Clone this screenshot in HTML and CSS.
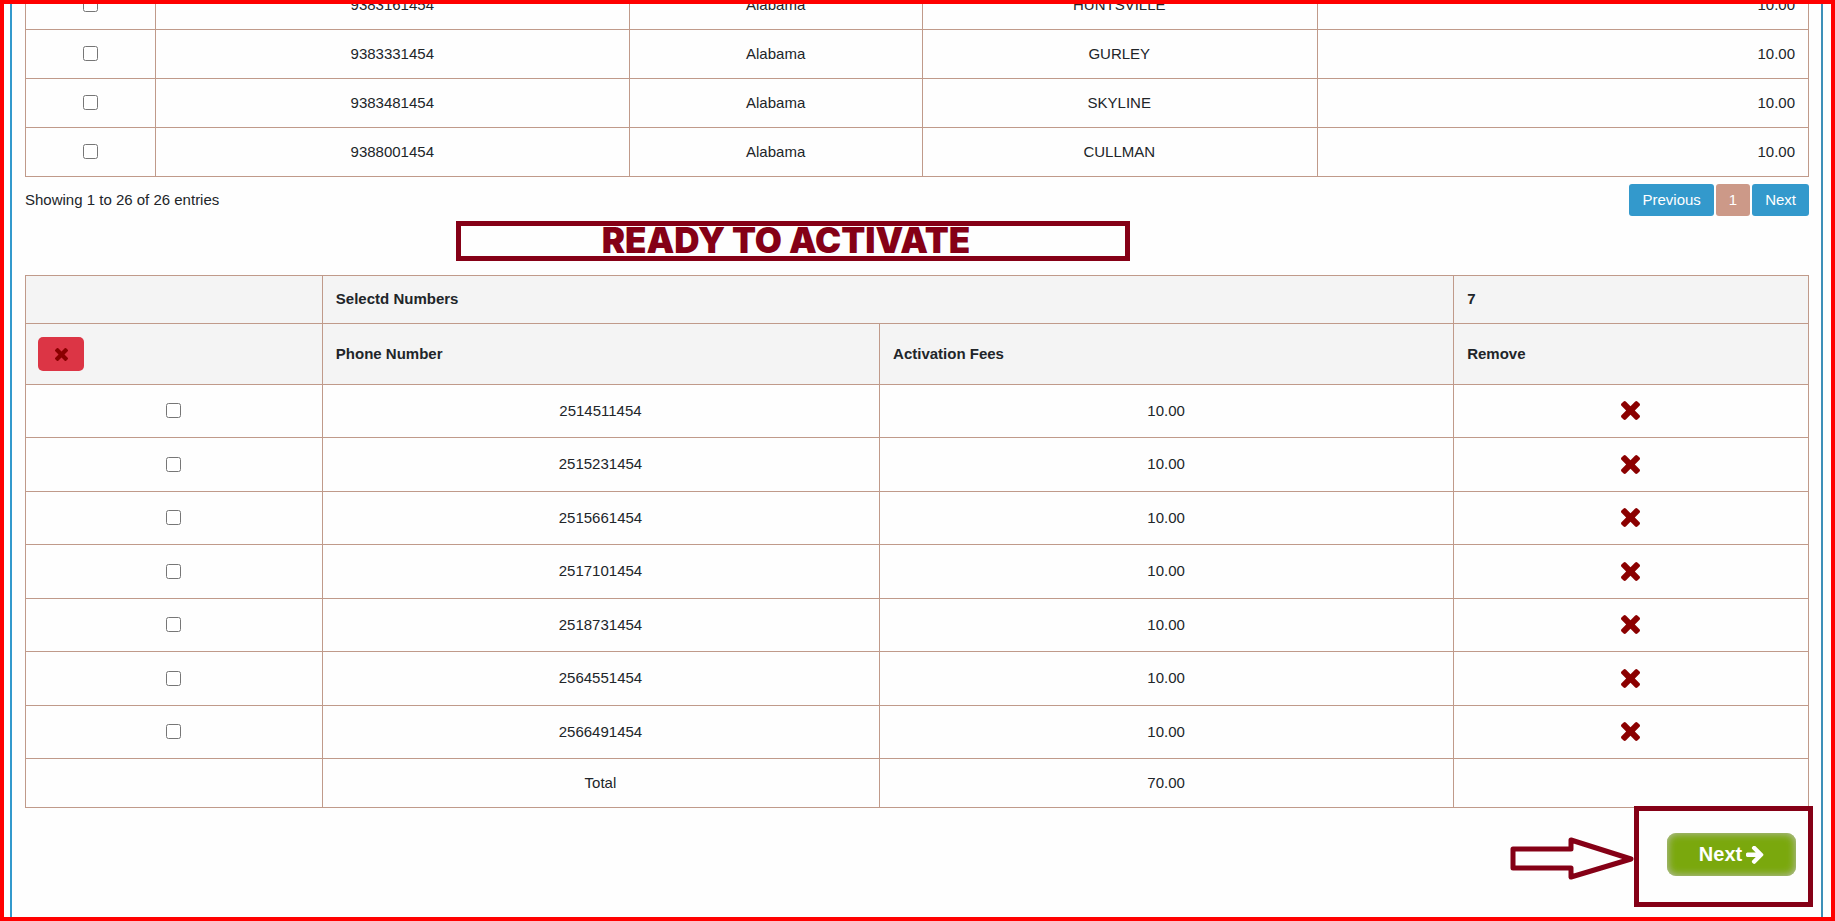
FILE: index.html
```html
<!DOCTYPE html>
<html lang="en">

<head>
  <meta charset="utf-8">
  <meta name="viewport" content="width=device-width, initial-scale=1">
  <title>Phone Numbers</title>
  <link rel="stylesheet" href="styles.css">
</head>

<body>
  <!-- shared icons -->
  <svg class="icon-defs" aria-hidden="true">
    <symbol id="icon-times" viewBox="302 366 1188 1188">
      <path d="M1490 1322q0 40-28 68l-136 136q-28 28-68 28t-68-28l-294-294-294 294q-28 28-68 28t-68-28l-136-136q-28-28-28-68t28-68l294-294-294-294q-28-28-28-68t28-68l136-136q28-28 68-28t68 28l294 294 294-294q28-28 68-28t68 28l136 136q28 28 28 68t-28 68l-294 294 294 294q28 28 28 68z"/>
    </symbol>
    <symbol id="icon-arrow" viewBox="128 219 1520 1520">
      <path d="M1600 960q0 54-37 91l-651 651q-39 37-91 37-51 0-90-37l-75-75q-38-38-38-91t38-91l293-293h-704q-52 0-84.5-37.5t-32.5-90.5v-128q0-53 32.5-90.5t84.5-37.5h704l-293-294q-38-36-38-90t38-90l75-75q38-38 90-38 53 0 91 38l651 651q37 35 37 90z"/>
    </symbol>
  </svg>

  <main class="panel">
    <table class="grid numbers">
      <colgroup>
        <col class="col-check">
        <col class="col-number">
        <col class="col-state">
        <col class="col-city">
        <col>
      </colgroup>
      <tbody>
        <tr>
          <td><input type="checkbox" aria-label="9383161454"></td>
          <td>9383161454</td>
          <td>Alabama</td>
          <td>HUNTSVILLE</td>
          <td class="amount">10.00</td>
        </tr>
        <tr>
          <td><input type="checkbox" aria-label="9383331454"></td>
          <td>9383331454</td>
          <td>Alabama</td>
          <td>GURLEY</td>
          <td class="amount">10.00</td>
        </tr>
        <tr>
          <td><input type="checkbox" aria-label="9383481454"></td>
          <td>9383481454</td>
          <td>Alabama</td>
          <td>SKYLINE</td>
          <td class="amount">10.00</td>
        </tr>
        <tr>
          <td><input type="checkbox" aria-label="9388001454"></td>
          <td>9388001454</td>
          <td>Alabama</td>
          <td>CULLMAN</td>
          <td class="amount">10.00</td>
        </tr>
      </tbody>
    </table>

    <div class="table-footer">
      <div class="info">Showing 1 to 26 of 26 entries</div>
      <nav class="pagination">
        <a href="#">Previous</a>
        <a href="#" class="current">1</a>
        <a href="#">Next</a>
      </nav>
    </div>

    <h2 class="banner">READY TO ACTIVATE</h2>

    <table class="grid selected">
      <colgroup>
        <col class="col-pick">
        <col class="col-phone">
        <col class="col-fees">
        <col>
      </colgroup>
      <thead>
        <tr>
          <th></th>
          <th colspan="2">Selectd Numbers</th>
          <th>7</th>
        </tr>
        <tr class="head-tall">
          <th>
            <button type="button" class="btn-remove-all" aria-label="Remove selected">
              <svg class="icon-small"><use href="#icon-times"/></svg>
            </button>
          </th>
          <th>Phone Number</th>
          <th>Activation Fees</th>
          <th>Remove</th>
        </tr>
      </thead>
      <tbody>
        <tr>
          <td><input type="checkbox" aria-label="2514511454"></td>
          <td>2514511454</td>
          <td>10.00</td>
          <td><button type="button" class="btn-remove" aria-label="Remove"><svg class="icon"><use href="#icon-times"/></svg></button></td>
        </tr>
        <tr>
          <td><input type="checkbox" aria-label="2515231454"></td>
          <td>2515231454</td>
          <td>10.00</td>
          <td><button type="button" class="btn-remove" aria-label="Remove"><svg class="icon"><use href="#icon-times"/></svg></button></td>
        </tr>
        <tr>
          <td><input type="checkbox" aria-label="2515661454"></td>
          <td>2515661454</td>
          <td>10.00</td>
          <td><button type="button" class="btn-remove" aria-label="Remove"><svg class="icon"><use href="#icon-times"/></svg></button></td>
        </tr>
        <tr>
          <td><input type="checkbox" aria-label="2517101454"></td>
          <td>2517101454</td>
          <td>10.00</td>
          <td><button type="button" class="btn-remove" aria-label="Remove"><svg class="icon"><use href="#icon-times"/></svg></button></td>
        </tr>
        <tr>
          <td><input type="checkbox" aria-label="2518731454"></td>
          <td>2518731454</td>
          <td>10.00</td>
          <td><button type="button" class="btn-remove" aria-label="Remove"><svg class="icon"><use href="#icon-times"/></svg></button></td>
        </tr>
        <tr>
          <td><input type="checkbox" aria-label="2564551454"></td>
          <td>2564551454</td>
          <td>10.00</td>
          <td><button type="button" class="btn-remove" aria-label="Remove"><svg class="icon"><use href="#icon-times"/></svg></button></td>
        </tr>
        <tr>
          <td><input type="checkbox" aria-label="2566491454"></td>
          <td>2566491454</td>
          <td>10.00</td>
          <td><button type="button" class="btn-remove" aria-label="Remove"><svg class="icon"><use href="#icon-times"/></svg></button></td>
        </tr>
      </tbody>
      <tfoot>
        <tr>
          <td></td>
          <td>Total</td>
          <td>70.00</td>
          <td></td>
        </tr>
      </tfoot>
    </table>

    <div class="actions">
      <svg class="pointer" viewBox="0 0 124 44" aria-hidden="true">
        <path d="M3 12H61V3L121 22L61 40V31H3Z"/>
      </svg>
      <div class="next-box">
        <button type="button" class="btn-next">Next <svg class="icon-next"><use href="#icon-arrow"/></svg></button>
      </div>
    </div>
  </main>
</body>

</html>
```
FILE: styles.css
```css
* {
  box-sizing: border-box;
}

body {
  margin: 0;
  min-height: 100vh;
  display: flex;
  flex-direction: column;
  overflow: hidden;
  border: 4px solid #ff0000;
  background-color: #fefefe;
  color: #212529;
  font-family: Arial, "Liberation Sans", sans-serif;
  font-size: 15px;
  line-height: 24px;
}

.icon-defs {
  position: absolute;
  width: 0;
  height: 0;
}

.panel {
  flex: 1;
  margin: 0 8px 0 6px;
  padding: 0 12px 0 13px;
  border-left: 2px solid #3399cc;
  border-right: 2px solid #3d8fb8;
  overflow: hidden;
}

/* tables */
.grid {
  width: 100%;
  table-layout: fixed;
  border-collapse: collapse;
}

.grid th,
.grid td {
  height: 49px;
  padding: 0 13px 1px 12px;
  border: 1px solid #c09a8a;
  text-align: center;
  vertical-align: middle;
}

.grid th {
  height: 48px;
  padding: 0 13px 1px;
  background-color: #f4f4f4;
  text-align: left;
}

.grid th:first-child {
  padding: 0 12px;
}

.grid td.amount {
  text-align: right;
}

.grid .head-tall th {
  height: 61px;
}

.selected tbody td {
  height: 53px;
}

.selected tbody tr:nth-child(even) td {
  height: 54px;
}

/* first row is scrolled half out of view */
.numbers {
  margin-top: -24px;
}

.col-check { width: 7.3%; }
.col-number { width: 26.6%; }
.col-state { width: 16.4%; }
.col-city { width: 22.15%; }

.col-pick { width: 16.65%; }
.col-phone { width: 31.25%; }
.col-fees { width: 32.2%; }

input[type="checkbox"] {
  display: block;
  width: 15px;
  height: 15px;
  margin: 0 auto;
}

/* info + pagination */
.table-footer {
  display: flex;
  justify-content: space-between;
  align-items: center;
  margin-top: 7px;
}

.pagination {
  display: flex;
  gap: 2px;
}

.pagination a {
  padding: 4px 13px;
  border-radius: 3px;
  background-color: #3399cc;
  color: #ffffff;
  text-decoration: none;
}

.pagination .current {
  background-color: #cc9988;
}

.banner {
  width: 37.8%;
  margin: 5px 0 14px 24.15%;
  padding: 0 14px 2px 0;
  border: 5px solid #850016;
  color: #850016;
  font-family: "Arial Black", Inter, sans-serif;
  font-size: 35px;
  font-weight: 900;
  line-height: 28px;
  text-align: center;
  white-space: nowrap;
}

/* buttons */
button {
  font-family: inherit;
  cursor: pointer;
}

.btn-remove-all {
  display: flex;
  justify-content: center;
  align-items: center;
  width: 46px;
  height: 34px;
  padding: 0;
  border: none;
  border-radius: 5px;
  background-color: #dc3545;
}

.btn-remove {
  display: block;
  margin: 0 auto;
  padding: 0;
  border: none;
  background: none;
}

.icon,
.icon-small {
  display: block;
  width: 19px;
  height: 19px;
  fill: #8b0000;
}

.icon-small {
  width: 13px;
  height: 13px;
}

.actions {
  display: flex;
  justify-content: flex-end;
  align-items: center;
  margin: -2px -4px 10px 0;
}

.pointer {
  width: 124px;
  height: 44px;
  margin-top: 5px;
  fill: none;
  stroke: #850016;
  stroke-width: 5;
  stroke-linejoin: round;
}

.next-box {
  position: relative;
  padding: 22px 12px 26px 28px;
  border: 5px solid #850016;
}

.btn-next {
  display: flex;
  justify-content: center;
  align-items: center;
  gap: 4px;
  width: 129px;
  height: 43px;
  padding: 0;
  border: none;
  border-radius: 9px;
  background-color: #7aa80d;
  box-shadow: inset 0 0 8px #c0c0c0;
  color: #ffffff;
  font-size: 20px;
  font-weight: bold;
}

.icon-next {
  width: 18px;
  height: 18px;
  fill: #ffffff;
}
```
